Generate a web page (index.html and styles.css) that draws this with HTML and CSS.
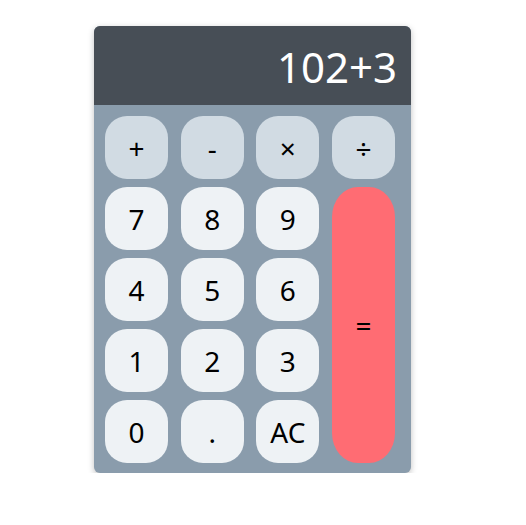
FILE: index.html
```html
<!DOCTYPE html>
<html>
<head>
<meta charset="utf-8">
<link rel="stylesheet" href="styles.css">
</head>
<body>
<div class="page">
  <div class="calc">
    <div class="display">102+3</div>
    <div class="keys">
      <button class="key op">+</button>
      <button class="key op">-</button>
      <button class="key op">×</button>
      <button class="key op">÷</button>
      <button class="key">7</button>
      <button class="key">8</button>
      <button class="key">9</button>
      <button class="key eq">=</button>
      <button class="key">4</button>
      <button class="key">5</button>
      <button class="key">6</button>
      <button class="key">1</button>
      <button class="key">2</button>
      <button class="key">3</button>
      <button class="key">0</button>
      <button class="key">.</button>
      <button class="key">AC</button>
    </div>
  </div>
</div>
</body>
</html>
```
FILE: styles.css
```css
html, body {
  margin: 0;
  padding: 0;
  background: #ffffff;
  font-family: "Noto Sans", "Open Sans", sans-serif;
}
.page {
  padding: 26px 0 0 94px;
}
.calc {
  width: 317px;
  background: #8a9cac;
  border-radius: 6px;
  overflow: hidden;
  box-shadow: 0 2px 6px rgba(0, 0, 0, 0.25);
}
.display {
  height: 79px;
  background: #474e56;
  color: #ffffff;
  font-size: 42px;
  display: flex;
  align-items: center;
  justify-content: flex-end;
  padding: 2px 14px 0 0;
  box-sizing: border-box;
  line-height: 1;
}
.keys {
  display: grid;
  grid-template-columns: repeat(4, 63px);
  grid-auto-rows: 63px;
  column-gap: 12.67px;
  row-gap: 8px;
  padding: 11px 16px 10px 11px;
}
.key {
  border: none;
  margin: 0;
  padding: 0;
  border-radius: 22px;
  background: #eef2f5;
  color: #000000;
  font-family: "Noto Sans", "Open Sans", sans-serif;
  font-size: 28px;
  display: flex;
  align-items: center;
  justify-content: center;
}
.op {
  background: #d1dbe3;
}
.eq {
  grid-column: 4;
  grid-row: 2 / span 4;
  background: #ff6c73;
  border-radius: 26px / 30px;
}
```
